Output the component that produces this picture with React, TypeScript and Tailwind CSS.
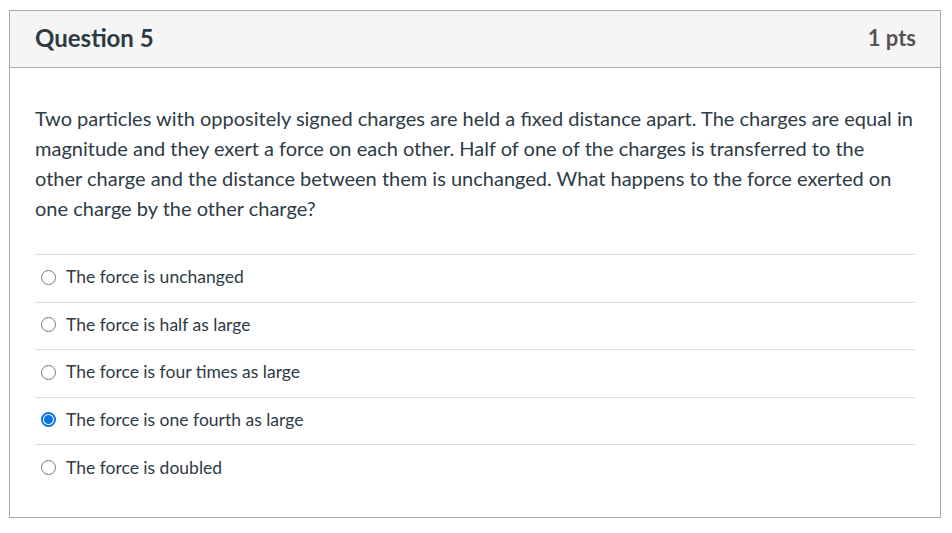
import React from 'react';

const answers = [
  { label: 'The force is unchanged', checked: false },
  { label: 'The force is half as large', checked: false },
  { label: 'The force is four times as large', checked: false },
  { label: 'The force is one fourth as large', checked: true },
  { label: 'The force is doubled', checked: false },
];

function Radio({ checked }: { checked: boolean }) {
  if (checked) {
    return (
      <span className="w-[15px] h-[15px] rounded-full border-2 border-[#0b74de] flex items-center justify-center shrink-0">
        <span className="w-[9px] h-[9px] rounded-full bg-[#0b74de]" />
      </span>
    );
  }
  return <span className="w-[15px] h-[15px] rounded-full border border-[#767676] shrink-0" />;
}

export default function App() {
  return (
    <div className="w-[952px] h-[533px] bg-white pt-[10px] pl-[9px]" style={{ fontFamily: 'Lato, "Open Sans", sans-serif' }}>
      <div className="w-[932px] h-[508px] border border-[#aaaaaa]">
        <div className="h-[57px] bg-[#f5f5f5] border-b border-[#aaaaaa] flex items-center justify-between pl-[25px] pr-[24px] pb-[3px]">
          <h2 className="text-[24px] font-bold text-[#2d3b45]">Question 5</h2>
          <span className="text-[22px] font-bold text-[#555555]">1 pts</span>
        </div>
        <div className="px-[25px] pt-[35px]">
          <p className="text-[20px] leading-[30px] text-[#2d3b45]">
            Two particles with oppositely signed charges are held a fixed distance apart. The charges are equal in
            magnitude and they exert a force on each other. Half of one of the charges is transferred to the other
            charge and the distance between them is unchanged. What happens to the force exerted on one charge by
            the other charge?
          </p>
          <div className="mt-[31px] w-[880px] border-t border-[#dddddd]">
            {answers.map((a) => (
              <div key={a.label} className="h-[47.5px] border-b border-[#dddddd] last:border-b-0 flex items-center gap-[10px] pl-[6px] pb-[2px]">
                <Radio checked={a.checked} />
                <span className="text-[17.5px] text-[#2d3b45]">{a.label}</span>
              </div>
            ))}
          </div>
        </div>
      </div>
    </div>
  );
}
